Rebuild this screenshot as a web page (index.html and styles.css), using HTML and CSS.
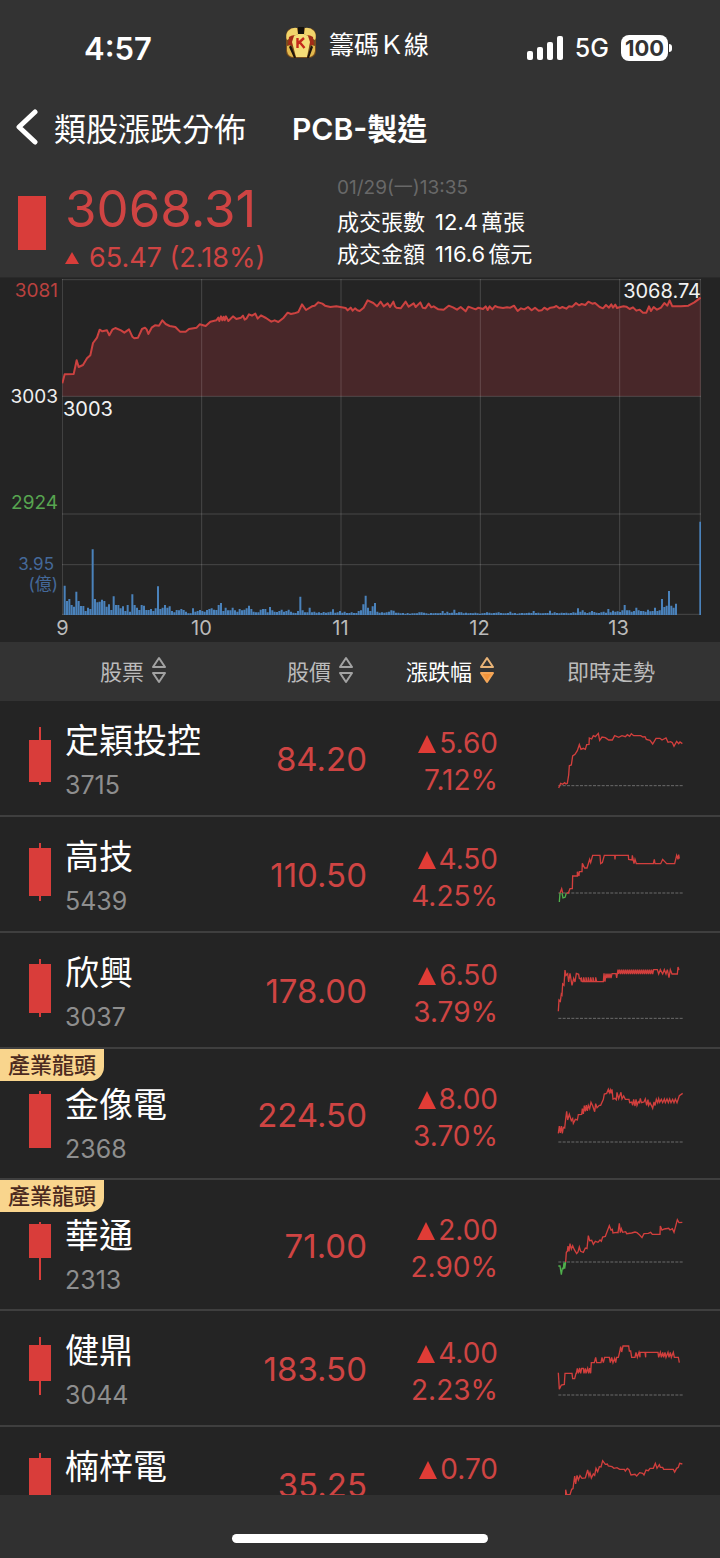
FILE: index.html
```html
<!DOCTYPE html>
<html lang="zh-Hant">
<head>
<meta charset="utf-8">
<meta name="viewport" content="width=device-width, initial-scale=1">
<title>PCB-製造</title>
<link rel="stylesheet" href="styles.css">
</head>
<body>
<div class="app">
  <div class="status">
    <div class="status-time">4:57</div>
    <div class="status-app">
      <svg class="app-icon" viewBox="0 0 32 32" aria-hidden="true">
        <rect x="1" y="1" width="30" height="30" rx="7" fill="#7a4d1c"/>
        <path d="M3 4Q7 0 12 1L13 7L8 10L2 13Q0 8 3 4Z" fill="#f1d46b"/>
        <path d="M29 4Q25 0 20 1L19 7L24 10L30 13Q32 8 29 4Z" fill="#f1d46b"/>
        <path d="M13 0H19V7H13Z" fill="#15120d"/>
        <path d="M4 10Q8 7 11 9L8 19L3 18Z" fill="#a32c18"/>
        <path d="M28 10Q24 7 21 9L24 19L29 18Z" fill="#a32c18"/>
        <path d="M9 9L13 7H19L23 9L25 15L22 30H11L7 15Z" fill="#f4dc78"/>
        <path d="M2 19L6 18L9 30Q3 30 2 24Z" fill="#e2b94e"/>
        <path d="M30 19L26 18L23 30Q29 30 30 24Z" fill="#e2b94e"/>
        <path d="M6 18L11 31H9L4 20ZM26 18L22 31H24L28 20Z" fill="#1d140c"/>
        <path d="M12.500 11V21M19 11L13 16.500M14.500 15L19.500 21" fill="none" stroke="#c5281b" stroke-width="2.4"/>
      </svg>
      <span>籌碼Ｋ線</span>
    </div>
    <div class="status-right">
      <svg class="signal" viewBox="0 0 36 24" aria-hidden="true">
        <rect x="0" y="15" width="6" height="9" rx="2"/><rect x="10" y="11" width="6" height="13" rx="2"/>
        <rect x="20" y="6" width="6" height="18" rx="2"/><rect x="30" y="0" width="6" height="24" rx="2"/>
      </svg>
      <span class="network">5G</span>
      <span class="battery"><span class="battery-level">100</span><span class="battery-cap"></span></span>
    </div>
  </div>

  <header class="nav">
    <button class="back" type="button">
      <svg viewBox="0 0 22 36" aria-hidden="true"><path d="M19 3L3 18L19 33"/></svg>
      <span>類股漲跌分佈</span>
    </button>
    <h1 class="title">PCB-製造</h1>
  </header>

  <section class="summary">
    <div class="index">
      <div class="index-candle"></div>
      <div>
        <div class="index-value">3068.31</div>
        <div class="index-change"><svg class="tri-small" viewBox="0 0 14 12" aria-hidden="true"><path d="M7 0L14 12H0Z"/></svg>65.47 (2.18%)</div>
      </div>
    </div>
    <div class="turnover">
      <div class="stamp">01/29(一)13:35</div>
      <div class="turnover-line"><span>成交張數</span><span>12.4<span class="unit">萬張</span></span></div>
      <div class="turnover-line"><span>成交金額</span><span>116.6<span class="unit">億元</span></span></div>
    </div>
  </section>

  <section class="chart" aria-label="走勢圖">
    <div class="y-axis">
      <span class="y-high">3081</span>
      <span class="y-mid">3003</span>
      <span class="y-low">2924</span>
      <span class="y-volume">3.95</span>
      <span class="y-unit">(億)</span>
    </div>
    <div class="plot">
      <svg class="plot-svg" viewBox="187 12 1917 1008" preserveAspectRatio="none" aria-hidden="true">
        <path class="area" id="area"/>
        <path class="grid-line" d="M187 14H2104M187 364H2104M187 717H2104M187 869H2104M187 1018H2104M188 12V1020M606 12V1020M1024 12V1020M1442 12V1020M1860 12V1020M2102 12V1020"/>
        <path class="volume" id="volume"/>
        <path class="price-line" id="line"/>
      </svg>
      <span class="tag tag-open">3003</span>
      <span class="tag tag-last">3068.74</span>
    </div>
    <div class="x-axis"><span>9</span><span>10</span><span>11</span><span>12</span><span>13</span></div>
  </section>

  <main class="list">
    <table class="stocks">
      <colgroup><col class="col-name"><col class="col-price"><col class="col-change"><col class="col-trend"></colgroup>
      <thead>
        <tr>
          <th class="h-name" scope="col"><button class="sort" type="button">股票<svg viewBox="0 0 14 28" aria-hidden="true"><path d="M7 2L13 11H1ZM7 26L13 17H1Z"/></svg></button></th>
          <th class="h-price" scope="col"><button class="sort" type="button">股價<svg viewBox="0 0 14 28" aria-hidden="true"><path d="M7 2L13 11H1ZM7 26L13 17H1Z"/></svg></button></th>
          <th class="h-change" scope="col"><button class="sort sort-active" type="button">漲跌幅<svg viewBox="0 0 14 28" aria-hidden="true"><path class="up" d="M7 2L13 11H1Z"/><path class="down" d="M7 26L13 17H1Z"/></svg></button></th>
          <th class="h-trend" scope="col">即時走勢</th>
        </tr>
      </thead>
      <tbody>
        <tr>
          <td><div class="stock"><svg class="candle" viewBox="0 0 22 58" aria-hidden="true"><path d="M10 0h2v58h-2zM0 13h22v42H0z"/></svg><div><div class="name">定穎投控</div><div class="code">3715</div></div></div></td>
          <td class="price">84.20</td>
          <td class="change"><div><svg class="tri" viewBox="0 0 18 18" aria-hidden="true"><path d="M9 0L18 18H0Z"/></svg>5.60</div><div>7.12%</div></td>
          <td class="trend"><svg class="spark" viewBox="45 51 390 174" aria-hidden="true"><path class="base" d="M55 227H428"/><path d="M56 234L62 220L68 223L74 218L78 222L82 220L86 195L88 167L94 165L98 138L105 133L112 122L118 104L123 118L130 115L136 118L140 104L147 103L148 84L155 87L160 77L166 80L175 70L179 91L186 81L196 83L206 90L217 90L224 77L236 82L246 77L256 80L262 74L269 79L274 71L281 77H302L309 81L315 80L319 88L330 91L338 102L348 85H360L366 90L378 84L384 97L392 95L397 98L402 109L410 94L416 101L420 96L427 101"/></svg></td>
        </tr>
        <tr>
          <td><div class="stock"><svg class="candle" viewBox="0 0 22 58" aria-hidden="true"><path d="M10 0h2v58h-2zM0 5h22v48H0z"/></svg><div><div class="name">高技</div><div class="code">5439</div></div></div></td>
          <td class="price">110.50</td>
          <td class="change"><div><svg class="tri" viewBox="0 0 18 18" aria-hidden="true"><path d="M9 0L18 18H0Z"/></svg>4.50</div><div>4.25%</div></td>
          <td class="trend"><svg class="spark" viewBox="45 399 390 174" aria-hidden="true"><path class="base" d="M55 549H428"/><path class="below" d="M58 576L60 549M66 549L69 564L75 562L79 549"/><path d="M60 549L65 536L68 549M79 549H85L90 536H97L98 498H112V485L117 498L118 485H126L127 460L134 474H141L149 448L152 458L158 436H180L182 461L187 458L193 436H224L225 448L226 436H265L266 448L276 450L277 436L282 461L285 448L289 461H340L343 448L345 461H362L368 448L380 461H404L410 436L414 448L416 434L418 446"/></svg></td>
        </tr>
        <tr>
          <td><div class="stock"><svg class="candle" viewBox="0 0 22 58" aria-hidden="true"><path d="M10 0h2v58h-2zM0 5h22v49H0z"/></svg><div><div class="name">欣興</div><div class="code">3037</div></div></div></td>
          <td class="price">178.00</td>
          <td class="change"><div><svg class="tri" viewBox="0 0 18 18" aria-hidden="true"><path d="M9 0L18 18H0Z"/></svg>6.50</div><div>3.79%</div></td>
          <td class="trend"><svg class="spark" viewBox="45 747 390 174" aria-hidden="true"><path class="base" d="M55 925H428"/><path d="M55 904L57 870L61 874L64 852L66 855L68 822L72 826L75 780L78 796L83 791L86 816L90 790L96 826L101 805L105 816L109 790L116 793L118 806H122L124 815V802L127 815H131V802L134 815H138V802L141 815H145V802L148 815H152V802L155 815H159V802L162 815H167V802L170 815H190L192 790L195 815L198 791L201 804L204 791L207 804L210 791L213 804L216 791H228L230 804L234 779L236 792L239 779L242 792L245 779L248 792L251 779L254 792L257 779L260 792L263 779L266 792L269 779L272 792L275 779L278 792L281 779L284 792L287 779L290 792L293 779L296 792L299 779L302 792L305 779L308 792L311 779L314 792L317 779L320 792L323 779L326 792L329 779L332 792L335 779L338 792L341 779H352L356 792L361 779L368 792L373 779L378 792L382 779L387 803L391 779L396 792H412L414 771L417 780"/></svg></td>
        </tr>
        <tr class="leader">
          <td><span class="badge">產業龍頭</span><div class="stock"><svg class="candle" viewBox="0 0 22 58" aria-hidden="true"><path d="M10 0h2v57h-2zM0 3h22v54H0z"/></svg><div><div class="name">金像電</div><div class="code">2368</div></div></div></td>
          <td class="price">224.50</td>
          <td class="change"><div><svg class="tri" viewBox="0 0 18 18" aria-hidden="true"><path d="M9 0L18 18H0Z"/></svg>8.00</div><div>3.70%</div></td>
          <td class="trend"><svg class="spark" viewBox="45 123 390 174" aria-hidden="true"><path class="base" d="M55 276H428"/><path d="M55 250L58 228L61 249L64 228L67 250L70 232L74 234L77 207L80 184L83 210L88 193L94 212L98 206L100 220L106 208L112 210L115 194L125 193L127 176L130 192L133 167L136 184L139 165L142 183L145 166L149 176L153 157L158 167L164 185L167 161L171 173L178 166H182L190 148L193 132L200 130L205 118L208 128L211 120L213 130L216 118L219 147L225 145L229 149L231 127L236 146L243 127L246 147L251 138L256 148H267L269 158L275 156L278 166L281 148L285 168L288 148L291 166L295 155L298 158L301 145L304 158L312 156L316 147L320 166L324 149L326 166L330 158L334 166L338 175L342 156L345 167L349 148L353 158L356 146L359 157L364 148L368 158L373 147L376 158L381 147L385 158L389 147L393 158L398 148L402 158L406 147L411 158L418 137L428 130"/></svg></td>
        </tr>
        <tr class="leader">
          <td><span class="badge">產業龍頭</span><div class="stock"><svg class="candle" viewBox="0 0 22 58" aria-hidden="true"><path d="M10 0h2v58h-2zM0 2h22v34H0z"/></svg><div><div class="name">華通</div><div class="code">2313</div></div></div></td>
          <td class="price">71.00</td>
          <td class="change"><div><svg class="tri" viewBox="0 0 18 18" aria-hidden="true"><path d="M9 0L18 18H0Z"/></svg>2.00</div><div>2.90%</div></td>
          <td class="trend"><svg class="spark" viewBox="45 516 390 174" aria-hidden="true"><path class="base" d="M55 636H428"/><path class="below" d="M55 648L60 648L64 674L67 655L70 656L72 638L74 656L77 636"/><path d="M77 636L79 607L82 604L84 588L87 604L90 581L94 597L98 587L103 599L110 611L114 606L118 591L122 604L130 607L136 594L141 596L145 557L149 572L155 571L160 583L166 574L174 577L180 570L184 574L188 561L196 559L200 548L208 527L213 540L217 538L219 549L230 547L234 548L238 520L241 548L244 536L248 547L257 545L260 551L275 549L285 546L291 548L299 555L306 563L312 551L325 550L332 547L337 553H360L361 528L366 540L373 537L386 535L390 540L397 536L402 547L406 532L412 509L417 518L427 517"/></svg></td>
        </tr>
        <tr>
          <td><div class="stock"><svg class="candle" viewBox="0 0 22 58" aria-hidden="true"><path d="M10 0h2v58h-2zM0 8h22v36H0z"/></svg><div><div class="name">健鼎</div><div class="code">3044</div></div></div></td>
          <td class="price">183.50</td>
          <td class="change"><div><svg class="tri" viewBox="0 0 18 18" aria-hidden="true"><path d="M9 0L18 18H0Z"/></svg>4.00</div><div>2.23%</div></td>
          <td class="trend"><svg class="spark" viewBox="45 861 390 174" aria-hidden="true"><path class="base" d="M55 1035H428"/><path d="M55 968L58 1018L64 1005L73 1003L75 970H96L98 986H104L108 970H109L112 955L115 970L119 954L122 970L125 955H130L132 970L136 955L138 970L143 955L146 970L149 954L152 970L154 938H163L167 922L170 938H183L186 922L190 938L194 922H208L211 938L215 922L219 938L224 925L227 938L230 922H235L239 906L242 890L245 906L249 888H266L268 903H272L275 922H285L288 907L292 922L297 907L300 922V907H315L317 922V907H354L356 922L361 907L364 922L368 907L371 922L375 907L378 922L384 907L387 922L391 907L394 922L400 907L403 922H415L418 938"/></svg></td>
        </tr>
        <tr>
          <td><div class="stock"><svg class="candle" viewBox="0 0 22 58" aria-hidden="true"><path d="M10 0h2v58h-2zM0 5h22v48H0z"/></svg><div><div class="name">楠梓電</div></div></div></td>
          <td class="price">35.25</td>
          <td class="change"><div><svg class="tri" viewBox="0 0 18 18" aria-hidden="true"><path d="M9 0L18 18H0Z"/></svg>0.70</div></td>
          <td class="trend"><svg class="spark" viewBox="45 1209 390 174" aria-hidden="true"><path class="base" d="M55 1383H428"/><path d="M55 1370L77 1335V1319L80 1334H90L95 1318L99 1316L104 1278L107 1302L111 1276L115 1290L120 1277L126 1285L136 1284L143 1260L147 1278L150 1268L154 1284L160 1272L164 1276L168 1255L173 1265L178 1250L183 1251L188 1232L196 1243L202 1242L205 1248L216 1250L222 1255L231 1253L239 1258L253 1258L256 1263L262 1255L267 1259L273 1275L285 1273L290 1278L299 1268L308 1270L312 1275L318 1260L325 1262L330 1255L340 1255L346 1240L351 1255L358 1244L361 1252H368L371 1258H400L404 1266L410 1255L415 1252L419 1240L427 1242"/></svg></td>
        </tr>
      </tbody>
    </table>
  </main>
  <footer class="home"><div class="home-bar"></div></footer>
</div>
<script src="chart.js"></script>
</body>
</html>
```
FILE: chart.js
```js
// Index level through the session, as x,y pairs in chart units.
const price = [
  188,325, 195,298, 222,297, 231,256, 237,276, 250,270, 262,250, 272,241, 280,204, 292,188, 300,164, 308,169,
  322,166, 329,181, 338,164, 347,159, 364,166, 374,173, 388,163, 398,185, 404,190, 415,188, 427,162, 436,158,
  441,163, 446,177, 456,158, 466,151, 478,152, 488,136, 498,147, 510,153, 527,156, 541,170, 558,170, 568,162,
  591,158, 600,148, 618,153, 632,140, 650,136, 656,128, 659,138, 664,124, 668,136, 672,125, 675,136, 679,124,
  686,138, 700,124, 710,132, 724,128, 730,122, 735,134, 741,130, 748,118, 757,122, 767,116, 774,131, 784,121,
  799,129, 815,140, 825,136, 836,141, 852,128, 864,113, 874,117, 884,115, 896,111, 907,88, 919,105, 937,94,
  945,92, 956,82, 968,86, 976,92, 992,96, 1010,94, 1038,99, 1044,106, 1053,98, 1059,107, 1066,100, 1073,106,
  1080,108, 1092,98, 1104,76, 1121,84, 1132,94, 1143,80, 1152,94, 1164,85, 1171,96, 1181,80, 1186,94, 1190,98, 1203,100,
  1218,80, 1227,95, 1242,85, 1248,96, 1262,82, 1269,98, 1277,100, 1287,86, 1295,97, 1302,94, 1316,103, 1332,104,
  1347,92, 1360,97, 1372,104, 1383,96, 1398,109, 1406,95, 1428,103, 1436,98, 1450,102, 1458,94, 1464,105, 1470,94,
  1478,103, 1486,93, 1496,97, 1510,99, 1522,97, 1532,98, 1543,92, 1554,108, 1564,100, 1574,103, 1585,96, 1596,106,
  1606,98, 1617,107, 1626,106, 1634,98, 1643,104, 1652,98, 1662,97, 1670,93, 1680,100, 1688,96, 1700,101, 1708,94,
  1718,95, 1729,84, 1738,91, 1746,87, 1757,90, 1766,80, 1778,86, 1786,84, 1800,96, 1810,100, 1819,90, 1828,98,
  1835,88, 1840,98, 1847,89, 1852,99, 1862,96, 1872,94, 1880,95, 1890,102, 1900,97, 1910,107, 1920,104, 1930,113,
  1940,113, 1948,94, 1954,108, 1962,96, 1972,104, 1984,98, 1994,84, 2003,92, 2010,76, 2018,94, 2044,94, 2066,92, 2084,82, 2103,68
];

let line = "";
for (let i = 0; i < price.length; i += 2) {
  line += (i ? "L" : "M") + price[i] + " " + price[i + 1];
}
document.getElementById("line").setAttribute("d", line);
document.getElementById("area").setAttribute("d", line + "V364H188Z");

// Turnover per minute.
const volume = [
  88,42,48,30,25,70,42,27,27,12,22,18,197,48,38,40,46,42,25,32,15,56,30,30,20,26,12,30,10,62,30,22,15,30,28,15,15,18,12,20,
  86,18,22,30,22,26,12,8,15,14,18,15,10,5,5,20,10,12,15,12,10,15,18,20,16,15,30,36,12,22,14,14,22,14,10,18,14,16,20,28,
  18,10,8,8,16,18,18,8,24,14,10,9,12,16,10,12,16,10,7,6,12,55,14,8,8,22,8,10,7,8,6,9,7,8,10,17,7,8,12,7,
  10,6,6,8,6,6,12,14,32,58,22,12,26,36,10,7,8,7,8,10,14,13,7,7,5,6,4,6,4,5,5,5,8,8,7,5,4,6,5,6,
  5,6,12,5,10,6,7,16,6,8,8,5,7,5,6,5,7,5,4,5,6,8,7,5,6,7,8,6,5,5,6,10,5,6,4,5,6,5,6,7,
  6,12,6,7,5,5,6,6,13,5,8,6,5,7,6,7,5,6,8,7,20,10,14,8,6,8,12,9,7,6,8,10,7,18,8,13,10,11,9,14,
  30,14,14,10,12,22,14,12,12,10,16,11,12,22,12,14,48,24,28,72,28,22,34
];
const base = 1020;
let bars = "";
volume.forEach((v, i) => {
  bars += "M" + (195 + i * 7) + " " + base + "v" + -v;
});
bars += "M2102 " + base + "v-280";
document.getElementById("volume").setAttribute("d", bars);
```
FILE: styles.css
```css
* { box-sizing: border-box; }

body {
  margin: 0;
  background: #242424;
  color: #fff;
  font-family: Inter, "Noto Sans CJK TC", sans-serif;
}

button {
  margin: 0;
  padding: 0;
  border: 0;
  background: none;
  color: inherit;
  font: inherit;
}

.app {
  display: flex;
  flex-direction: column;
  height: 100vh;
}

.status,
.nav,
.summary { background: #333; flex: none; }

/* Status bar */
.status {
  display: grid;
  grid-template-columns: 1fr auto 1fr;
  align-items: center;
  height: 96px;
  padding: 0 48px 0 42px;
}

.status-time { padding-left: 42px; font-size: 31px; font-weight: 600; }

.status-app {
  display: flex;
  align-items: center;
  gap: 12px;
  padding-bottom: 10px;
  font-size: 25px;
}

.app-icon { width: 32px; height: 32px; }

.status-right {
  display: flex;
  align-items: center;
  justify-content: flex-end;
  gap: 12px;
}

.signal { width: 36px; height: 24px; fill: #fff; }
.network { font-size: 25px; font-weight: 500; }
.battery { display: flex; align-items: center; gap: 1px; }

.battery-level {
  width: 47px;
  border-radius: 8px;
  background: #fff;
  color: #333;
  font-size: 22px;
  font-weight: 700;
  line-height: 26px;
  text-align: center;
}

.battery-cap {
  width: 3px;
  height: 8px;
  border-radius: 0 3px 3px 0;
  background: #fff;
}

/* Navigation */
.nav {
  display: flex;
  align-items: center;
  gap: 46px;
  height: 64px;
  padding: 0 16px 3px;
}

.back {
  display: flex;
  align-items: center;
  gap: 16px;
  font-size: 32px;
}

.back svg {
  width: 22px;
  height: 36px;
  fill: none;
  stroke: #fff;
  stroke-width: 5;
  stroke-linecap: round;
  stroke-linejoin: round;
}

.title { margin: 0; font-size: 30px; font-weight: 600; }

/* Index summary */
.summary {
  display: grid;
  grid-template-columns: 319px 1fr;
  align-items: start;
  height: 118px;
  padding: 12px 18px 0;
  border-bottom: 1px solid #2a2a2a;
}

.index { display: flex; gap: 19px; padding-top: 2px; color: #cf4443; }
.index-candle { width: 28px; height: 54px; margin-top: 22px; background: #d93d3a; }
.index-value { font-size: 51px; line-height: 70px; }

.index-change {
  display: flex;
  align-items: center;
  gap: 10px;
  font-size: 27px;
  line-height: 28px;
}

.tri-small { width: 14px; height: 12px; fill: #d93d3a; }

.turnover { font-size: 22px; line-height: 32px; }
.stamp { margin-bottom: 2px; color: #686868; font-size: 19px; line-height: 32px; }
.turnover-line { display: flex; gap: 10px; }
.turnover-line > span { white-space: nowrap; }
.unit { margin-left: 3px; }

/* Intraday chart */
.chart {
  display: grid;
  grid-template-columns: 62px 1fr;
  flex: none;
  padding: 1px 19px 0 0;
}

.y-axis {
  display: flex;
  flex-direction: column;
  padding-right: 4px;
  font-size: 19px;
  line-height: 24px;
  text-align: right;
}

.y-high { color: #b9413f; }
.y-mid { margin-top: 82px; color: #eee; }
.y-low { margin-top: 82px; color: #57a550; }
.y-volume { margin-top: 39px; padding-right: 4px; color: #44699a; font-size: 17px; line-height: 20px; }
.y-unit { color: #44699a; font-size: 17px; line-height: 20px; }

.plot { position: relative; }
.plot-svg { display: block; width: 100%; height: 336px; }
.plot-svg path { vector-effect: non-scaling-stroke; fill: none; }
.plot-svg .area { fill: #482729; }
.grid-line { stroke: rgba(255, 255, 255, .16); stroke-width: 1; }
.price-line { stroke: #cc4240; stroke-width: 2; stroke-linejoin: round; }
.volume { stroke: #4a82bb; stroke-width: 2; }

.tag { position: absolute; font-size: 20px; line-height: 24px; color: #f2f2f2; }
.tag-open { left: 1px; top: 118px; }
.tag-last { right: 0; top: 0; }

.x-axis {
  display: grid;
  grid-column: 1 / -1;
  grid-template-columns: repeat(5, 139px);
  margin-left: -7px;
  height: 27px;
  color: #bbb;
  font-size: 20px;
  line-height: 27px;
  text-align: center;
}

/* Stock list */
.list {
  flex: 1;
  min-height: 0;
  overflow-y: auto;
  scrollbar-width: none;
}

.stocks { width: 100%; border-collapse: separate; border-spacing: 0; table-layout: fixed; }
.col-price { width: 148px; }
.col-change { width: 131px; }
.col-trend { width: 222px; }

.stocks th {
  position: sticky;
  top: 0;
  z-index: 1;
  height: 59px;
  padding: 0 0 3px;
  background: #333;
  color: #bbb;
  font-size: 22px;
  font-weight: 400;
}

.stocks .h-name { padding-left: 47px; }
.stocks .h-price { padding-right: 14px; text-align: right; }
.stocks .h-change { padding-right: 4px; text-align: right; }
.stocks .h-trend { padding-left: 4px; }

.sort { display: inline-flex; align-items: center; gap: 8px; }
.sort svg { width: 14px; height: 28px; fill: none; stroke: #a2a2a2; stroke-width: 2; stroke-linejoin: round; }
.sort-active { color: #fff; }
.sort-active .up { stroke: #e8b377; }
.sort-active .down { fill: #f4943a; stroke: #f4a658; }

.stocks td {
  position: relative;
  height: 116px;
  padding: 0;
  border-bottom: 2px solid #3f3f3f;
  vertical-align: top;
}

.stocks .leader td { height: 131px; padding-top: 16px; }

.badge {
  position: absolute;
  left: 0;
  top: 0;
  padding: 0 8px;
  border-bottom-right-radius: 14px;
  background: #f9d58d;
  color: #4b2a1e;
  font-size: 22px;
  font-weight: 500;
  line-height: 32px;
}

.stock { display: flex; gap: 14px; padding: 18px 0 0 29px; }
.candle { flex: none; width: 22px; height: 58px; margin-top: 8px; fill: #d93d3a; }
.name { font-size: 34px; line-height: 44px; white-space: nowrap; }
.code { color: #8e8e8e; font-size: 25px; line-height: 44px; }

.price,
.change { color: #cf4443; text-align: right; }

.stocks .price { padding-top: 6px; font-size: 33px; line-height: 104px; }
.stocks .change { padding-top: 24px; font-size: 28px; line-height: 37px; }
.stocks .leader .price { padding-top: 14px; }
.stocks .leader .change { padding-top: 32px; }
.change div { display: flex; align-items: center; justify-content: flex-end; gap: 3px; }
.tri { width: 18px; height: 18px; fill: #e03c36; }

.spark {
  display: block;
  width: 130px;
  height: 58px;
  margin: 26px 0 0 57px;
  overflow: visible;
  fill: none;
  stroke: #d23f3d;
  stroke-width: 4;
}

.spark .base { stroke: #6b6b6b; stroke-width: 3; stroke-dasharray: 9 4; }
.spark .below { stroke: #4fb04c; }

/* Home indicator */
.home {
  display: flex;
  flex: none;
  justify-content: center;
  align-items: flex-end;
  height: 63px;
  padding-bottom: 15px;
  background: #303030;
}

.home-bar { width: 256px; height: 9px; border-radius: 5px; background: #fff; }
```
